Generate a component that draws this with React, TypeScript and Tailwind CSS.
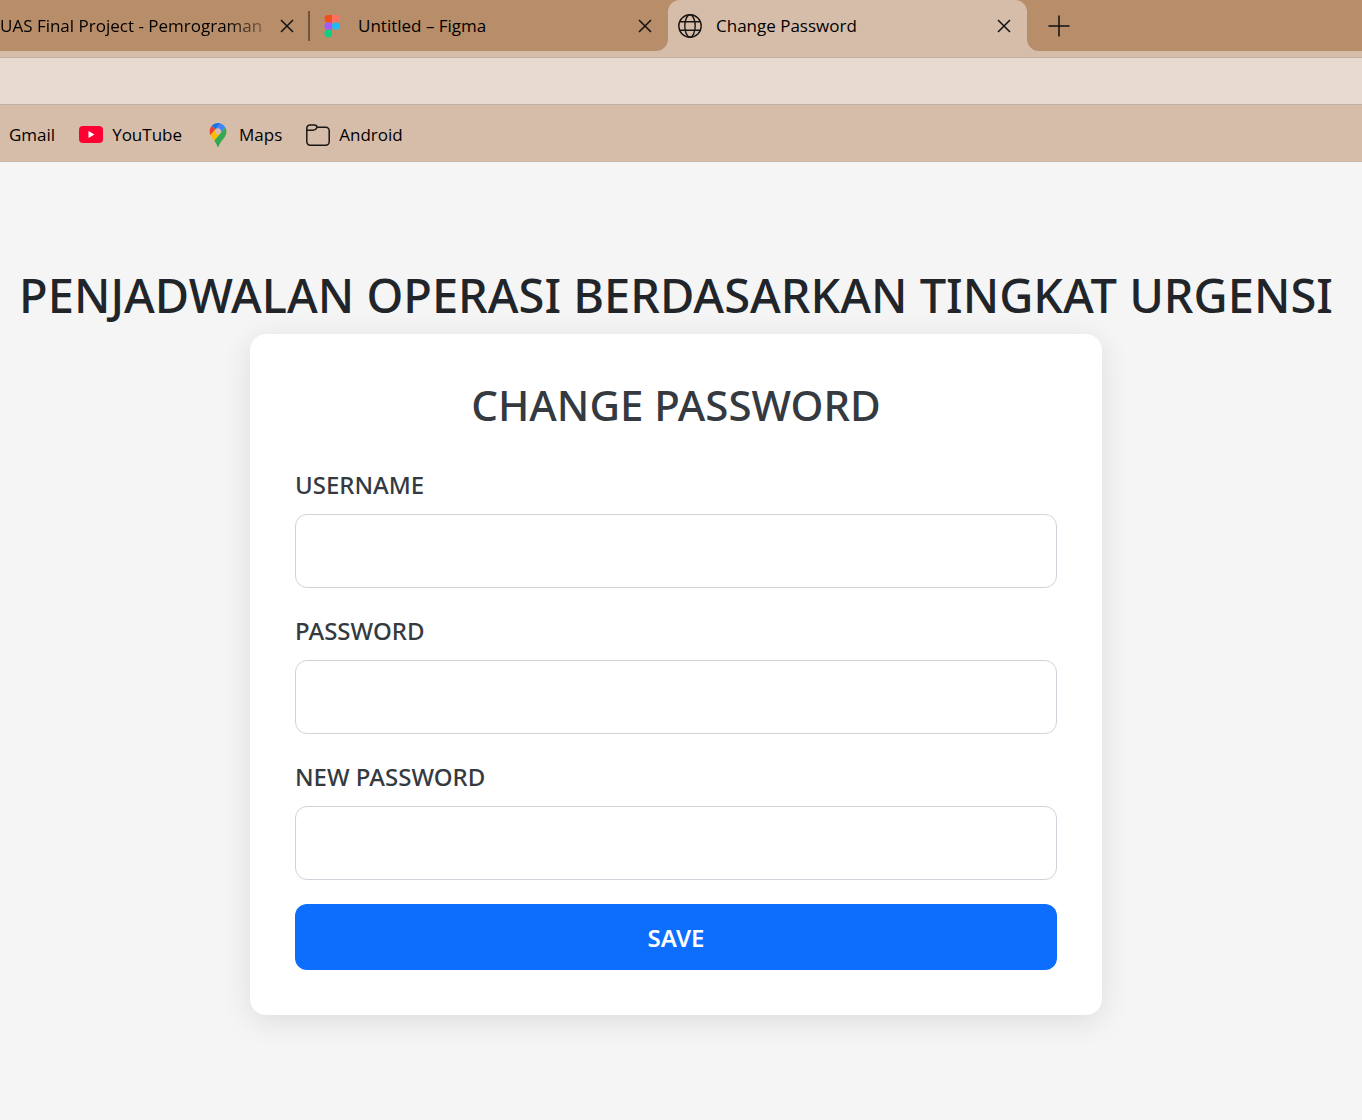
import React from "react";

function CloseIcon() {
  return (
    <svg viewBox="0 0 14 14" className="size-[14px]" fill="none" stroke="#111" strokeWidth="1.5" aria-hidden="true">
      <path d="M1 1l12 12M13 1L1 13" />
    </svg>
  );
}

function FigmaIcon() {
  return (
    <svg viewBox="0 0 16 24" className="h-6 w-4 shrink-0" aria-hidden="true">
      <path d="M4.2 1H8v7.4H4.2a3.7 3.7 0 0 1 0-7.4z" fill="#f24e1e" />
      <path d="M8 1h3.8a3.7 3.7 0 0 1 0 7.4H8z" fill="#ff7262" />
      <path d="M4.2 8.4H8v7.4H4.2a3.7 3.7 0 0 1 0-7.4z" fill="#a259ff" />
      <circle cx="11.8" cy="12.1" r="3.7" fill="#1abcfe" />
      <path d="M4.2 15.8H8v3.7a3.75 3.75 0 1 1-3.8-3.7z" fill="#0acf83" />
    </svg>
  );
}

function GlobeIcon() {
  return (
    <svg viewBox="0 0 24 24" className="size-6 shrink-0" fill="none" stroke="#1a1614" strokeWidth="1.4" aria-hidden="true">
      <circle cx="12" cy="12" r="11.2" />
      <ellipse cx="12" cy="12" rx="5.2" ry="11.2" />
      <path d="M1.8 7.7h20.4M1.8 16.3h20.4" />
    </svg>
  );
}

function YouTubeIcon() {
  return (
    <svg viewBox="0 0 24 17" className="h-[17px] w-6 shrink-0" aria-hidden="true">
      <rect width="24" height="17" rx="4" fill="#ff0033" />
      <path d="M9.5 5l6 3.5-6 3.5z" fill="#fff" />
    </svg>
  );
}

function MapsIcon() {
  return (
    <svg viewBox="0 0 92.3 132.3" className="h-6 w-6 shrink-0" aria-hidden="true">
      <path fill="#1a73e8" d="M60.2 2.2C55.8.8 51 0 46.1 0 32 0 19.3 6.4 10.8 16.5l21.8 18.3L60.2 2.2z" />
      <path fill="#ea4335" d="M10.8 16.5C4.1 24.5 0 34.9 0 46.1c0 8.7 1.7 15.7 4.6 22l28-33.3-21.8-18.3z" />
      <path fill="#4285f4" d="M46.2 28.5c9.8 0 17.7 7.9 17.7 17.7 0 4.3-1.6 8.3-4.2 11.4 0 0 13.9-16.6 27.5-32.7-5.6-10.8-15.3-19-27-22.7L32.6 34.8c3.3-3.8 8.1-6.3 13.6-6.3" />
      <path fill="#fbbc04" d="M46.2 63.8c-9.8 0-17.7-7.9-17.7-17.7 0-4.3 1.5-8.3 4.1-11.3l-28 33.3c4.8 10.6 12.8 19.2 21 29.9l34.1-40.5c-3.3 3.9-8.1 6.3-13.5 6.3" />
      <path fill="#34a853" d="M59.1 109.2c15.4-24.1 33.3-35 33.3-63 0-7.7-1.9-14.9-5.2-21.3L25.6 98c2.6 3.4 5.3 7.3 7.9 11.3 9.4 14.5 6.8 23.1 12.8 23.1s3.4-8.7 12.8-23.2" />
    </svg>
  );
}

function FolderIcon() {
  return (
    <svg viewBox="0 0 24 22" className="h-[22px] w-6 shrink-0" fill="none" stroke="#1a1614" strokeWidth="1.5" aria-hidden="true">
      <path d="M.8 4A3.1 3.1 0 0 1 4 1h4.4c1.8 0 2.6 1.1 2.8 2.3h8.6a3.4 3.4 0 0 1 3.4 3.4v11.1a3.4 3.4 0 0 1-3.4 3.4H4.2a3.4 3.4 0 0 1-3.4-3.4z" />
      <path d="M.8 6.3h6.4c2.6 0 3.2-1.6 4-3" />
    </svg>
  );
}

function TabClose({ name }: { name: string }) {
  return (
    <button type="button" aria-label={`Close ${name}`} className="ml-auto flex size-6 shrink-0 items-center justify-center">
      <CloseIcon />
    </button>
  );
}

function Bookmark({ label, icon }: { label: string; icon?: React.ReactNode }) {
  return (
    <a href="#" className="flex items-center gap-[9px]">
      {icon}
      <span>{label}</span>
    </a>
  );
}

function Field({ id, label, type }: { id: string; label: string; type: string }) {
  return (
    <div className="mb-6">
      <label htmlFor={id} className="mb-[11px] block pt-px text-[24px] leading-9 font-medium text-[#343a40]">
        {label}
      </label>
      <input
        id={id}
        type={type}
        className="block h-[74px] w-full rounded-xl border border-[#ced4da] bg-white px-5 text-[24px] text-[#343a40] outline-none focus:border-[#0d6efd]"
      />
    </div>
  );
}

export default function App() {
  return (
    <div className="flex min-h-screen flex-col bg-[#f5f5f5] font-['Noto_Sans',sans-serif]">
      <header className="bg-[#d6bdaa] font-['Open_Sans',sans-serif] text-[17px] leading-6 text-black">
        <div className="flex h-[51px]">
          <div className="flex w-[668px] shrink-0 items-center rounded-br-xl bg-[#b88d69]">
            <div className="flex w-[308px] items-center pr-[9px]">
              <span className="whitespace-nowrap [mask-image:linear-gradient(to_right,black_225px,transparent_280px)]">
                UAS Final Project - Pemrograman
              </span>
              <TabClose name="UAS Final Project" />
            </div>
            <div className="h-[30px] w-[2px] bg-[#6f543e]" />
            <div className="flex flex-1 items-center gap-[18px] pr-[11px] pl-[14px]">
              <FigmaIcon />
              <span>Untitled – Figma</span>
              <TabClose name="Untitled – Figma" />
            </div>
          </div>
          <div className="flex w-[359px] shrink-0 bg-[#b88d69]">
            <div className="flex flex-1 items-center gap-[14px] rounded-t-xl bg-[#d6bdaa] pr-[11px] pl-[10px]">
              <GlobeIcon />
              <span>Change Password</span>
              <TabClose name="Change Password" />
            </div>
          </div>
          <div className="flex flex-1 items-center rounded-bl-xl bg-[#b88d69] pl-5">
            <button type="button" aria-label="New tab" className="flex size-6 items-center justify-center">
              <svg viewBox="0 0 22 22" className="size-[22px]" fill="none" stroke="#111" strokeWidth="1.5" aria-hidden="true">
                <path d="M11 .5v21M.5 11h21" />
              </svg>
            </button>
          </div>
        </div>
        <div className="pt-[6px]">
          <input
            type="text"
            aria-label="Address"
            className="block h-12 w-full border-y border-[#bfb0a3] bg-[#e7dacf] px-4 outline-none"
          />
        </div>
        <nav aria-label="Bookmarks" className="flex h-[57px] items-center gap-6 border-b border-[#c9b3a2] pt-[3px] pl-[9px]">
          <Bookmark label="Gmail" />
          <Bookmark label="YouTube" icon={<YouTubeIcon />} />
          <Bookmark label="Maps" icon={<MapsIcon />} />
          <Bookmark label="Android" icon={<FolderIcon />} />
        </nav>
      </header>

      <main className="flex flex-1 flex-col items-center pt-[104px] pr-[10px] pb-10">
        <h1 className="mb-[10px] text-center text-[47px] leading-[58px] font-medium whitespace-nowrap text-[#212529]">
          PENJADWALAN OPERASI BERDASARKAN TINGKAT URGENSI
        </h1>
        <form
          onSubmit={(e) => e.preventDefault()}
          className="w-full max-w-[852px] rounded-2xl bg-white p-[45px] shadow-[0_6px_30px_rgba(0,0,0,0.1)]"
        >
          <h2 className="mb-9 text-center text-[42px] leading-[51px] font-medium text-[#343a40]">CHANGE PASSWORD</h2>
          <Field id="username" label="USERNAME" type="text" />
          <Field id="password" label="PASSWORD" type="password" />
          <Field id="new-password" label="NEW PASSWORD" type="password" />
          <button type="submit" className="h-[66px] w-full rounded-xl bg-[#0d6efd] pt-[2px] text-[24px] leading-9 font-semibold text-white">
            SAVE
          </button>
        </form>
      </main>
    </div>
  );
}
